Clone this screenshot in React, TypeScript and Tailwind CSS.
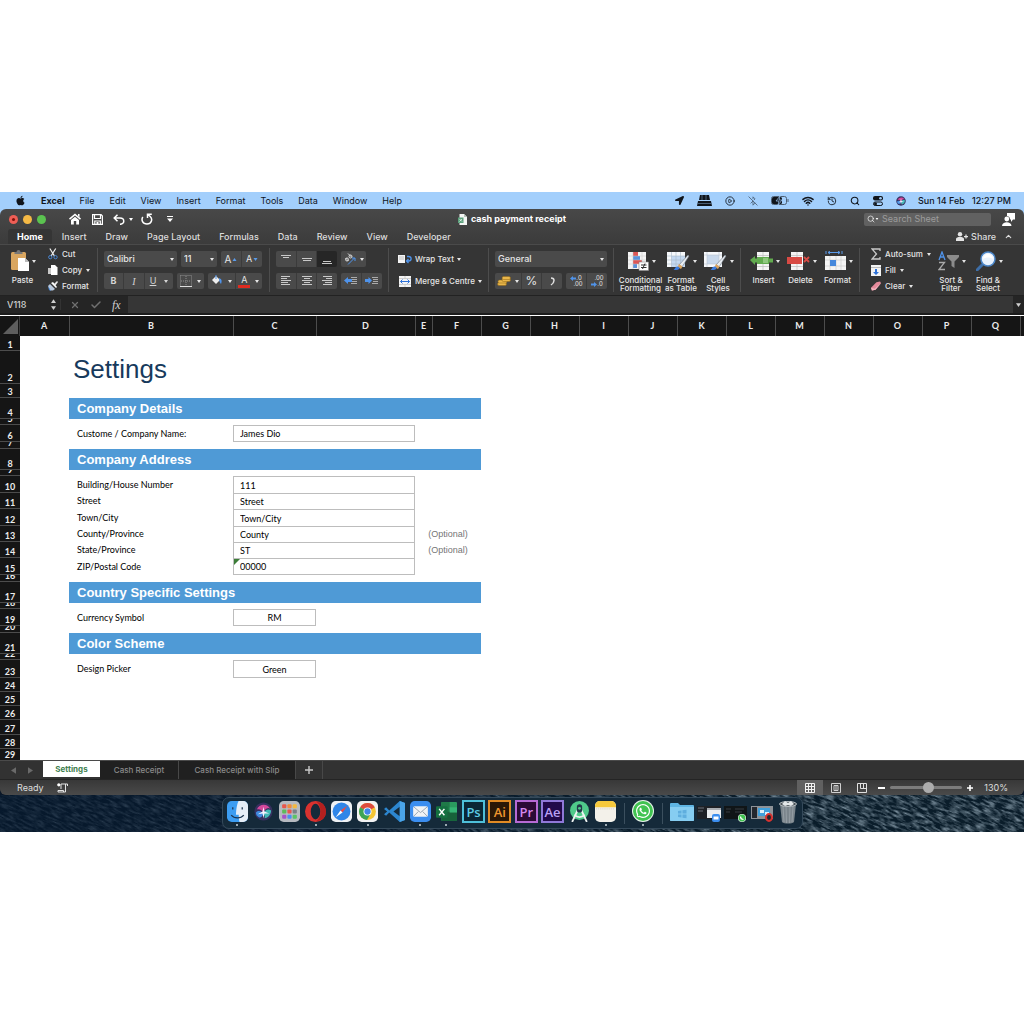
import type { ReactNode } from "react";
import clsx from "clsx";
import { FaApple, FaLocationArrow, FaWhatsapp } from "react-icons/fa";
import { BluetoothOff, Check, ChevronUp, CirclePlay, History, Search, Wifi, X } from "lucide-react";

const menus = ["File", "Edit", "View", "Insert", "Format", "Tools", "Data", "Window", "Help"];
const ribbonTabs = ["Home", "Insert", "Draw", "Page Layout", "Formulas", "Data", "Review", "View", "Developer"];
const columns = "ABCDEFGHIJKLMNOPQ".split("");
const columnWidths: Record<string, string> = {
  B: "w-[164px]",
  C: "w-[83px]",
  D: "w-[99px]",
  E: "w-[17px]",
};

type Row = {
  n: number;
  h: string;
  title?: string;
  band?: string;
  label?: string;
  value?: string;
  short?: boolean;
  optional?: boolean;
  last?: boolean;
  flag?: boolean;
};

const rows: Row[] = [
  { n: 1, h: "h-[15px]" },
  { n: 2, h: "h-[33px]", title: "Settings" },
  { n: 3, h: "h-[14px]" },
  { n: 4, h: "h-[21px]", band: "Company Details" },
  { n: 5, h: "h-[6px]" },
  { n: 6, h: "h-[17px]", label: "Custome / Company Name:", value: "James Dio", last: true },
  { n: 7, h: "h-[7px]" },
  { n: 8, h: "h-[21px]", band: "Company Address" },
  { n: 9, h: "h-[6px]" },
  { n: 10, h: "h-[17px]", label: "Building/House Number", value: "111" },
  { n: 11, h: "h-[16px]", label: "Street", value: "Street" },
  { n: 12, h: "h-[17px]", label: "Town/City", value: "Town/City" },
  { n: 13, h: "h-[16px]", label: "County/Province", value: "County", optional: true },
  { n: 14, h: "h-[16px]", label: "State/Province", value: "ST", optional: true },
  { n: 15, h: "h-[17px]", label: "ZIP/Postal Code", value: "00000", last: true, flag: true },
  { n: 16, h: "h-[7px]" },
  { n: 17, h: "h-[21px]", band: "Country Specific Settings" },
  { n: 18, h: "h-[6px]" },
  { n: 19, h: "h-[17px]", label: "Currency Symbol", value: "RM", short: true, last: true },
  { n: 20, h: "h-[7px]" },
  { n: 21, h: "h-[21px]", band: "Color Scheme" },
  { n: 22, h: "h-[6px]" },
  { n: 23, h: "h-[18px]", label: "Design Picker", value: "Green", short: true, last: true },
  { n: 24, h: "h-[14px]" },
  { n: 25, h: "h-[14px]" },
  { n: 26, h: "h-[14px]" },
  { n: 27, h: "h-[15px]" },
  { n: 28, h: "h-[14px]" },
  { n: 29, h: "h-[11px]" },
];

function Caret({ className }: { className?: string }) {
  return (
    <svg viewBox="0 0 4 3" className={clsx("shrink-0 fill-current", className ?? "h-[3px] w-1")}>
      <path d="M0 0h4L2 3z" />
    </svg>
  );
}

function SiriOrb({ className }: { className: string }) {
  return (
    <svg viewBox="0 0 20 20" className={className}>
      <circle cx="10" cy="10" r="9.500" fill="#37305f" />
      <path d="M3 8C5 2 14 1 17 7c-3-2-6 1-7 4C8 8 5 7 3 8z" fill="#d4489b" />
      <path d="M2 11c3-3 6-1 8 1-1 3-3 5-5 4-2-1-3-3-3-5z" fill="#3f8be0" />
      <path d="M10 12c2-4 5-5 8-3 0 4-3 8-7 8 1-2 0-3-1-5z" fill="#42b8b6" />
      <path d="M10 5l1 5 5 2-5 0-1 5-1-5-5 1 5-3z" fill="#f4f2ff" />
    </svg>
  );
}

function MenuBar() {
  return (
    <div className="flex h-[17px] items-center bg-[#a3cffc] text-[9px] text-[#10151c]">
      <FaApple className="ml-[15px] size-[11px]" />
      <nav className="ml-[15px] flex items-center gap-[15px]">
        <button className="font-bold">Excel</button>
        {menus.map((m) => (
          <button key={m}>{m}</button>
        ))}
      </nav>
      <div className="ml-auto flex items-center gap-[13px]">
        <FaLocationArrow className="size-[9px]" />
        <svg viewBox="0 0 15 11" className="h-[11px] w-[15px]">
          <path d="M3 0h9l1 5H2z M1 6h13l1 5H0z" fill="#10151c" />
          <path d="M5 0v5M9 0v5M1 8.500h13" stroke="#a3cffc" strokeWidth=".4" />
        </svg>
        <CirclePlay className="size-[10px]" />
        <BluetoothOff className="size-[10px] opacity-60" />
        <svg viewBox="0 0 18 9" className="h-[9px] w-[18px]" fill="none">
          <rect x=".5" y=".5" width="15" height="8" rx="2" stroke="#4d6075" />
          <rect x="1" y="1" width="10" height="7" rx="1.500" fill="#10151c" />
          <path d="M17 3v3" stroke="#4d6075" />
          <path d="M9 0L5 5h3L7 9l4-5H8z" fill="#10151c" stroke="#a3cffc" strokeWidth=".7" />
        </svg>
        <Wifi strokeWidth={3} className="size-3" />
        <History className="size-[10px]" />
        <Search strokeWidth={2.500} className="size-[10px]" />
        <svg viewBox="0 0 10 10" className="size-[10px]">
          <rect width="10" height="4.500" rx="2" fill="#10151c" />
          <circle cx="7.500" cy="2.200" r="1.300" fill="#a3cffc" />
          <rect x=".5" y="6" width="9" height="3.500" rx="1.700" fill="none" stroke="#10151c" />
          <circle cx="2.500" cy="7.800" r="1.500" fill="#10151c" />
        </svg>
        <SiriOrb className="size-[10px]" />
      </div>
      <div className="flex gap-[7px] pr-[13px] pl-[12px] font-medium">
        <span>Sun 14 Feb</span>
        <span>12:27 PM</span>
      </div>
    </div>
  );
}

function TitleBar() {
  return (
    <div className="grid h-5 grid-cols-[1fr_auto_1fr] items-center text-white">
      <div className="flex items-center">
        <div className="ml-[9px] flex gap-[5px]">
          <button aria-label="Close" className="flex size-[9px] items-center justify-center rounded-full bg-[#ee5e55]">
            <span className="size-[3px] rounded-full bg-[#7c100b]" />
          </button>
          <button aria-label="Minimise" className="size-[9px] rounded-full bg-[#f5b945]" />
          <button aria-label="Zoom" className="size-[9px] rounded-full bg-[#5bc350]" />
        </div>
        <button aria-label="Home" className="ml-[23px]">
          <svg viewBox="0 0 12 12" className="size-3" fill="#fff">
            <path d="M6 .5l6 5-1 1.200L6 2.600 1 6.700 0 5.500zM9 1h1.500v3L9 2.800z" />
            <path d="M2 7l4-3.300L10 7v4.500H7.200V8H4.800v3.500H2z" />
          </svg>
        </button>
        <button aria-label="Save" className="ml-[11px]">
          <svg viewBox="0 0 11 11" className="size-[11px]" fill="none" stroke="#fff" strokeWidth="1.200">
            <path d="M.6.600h8.500l1.300 1.300v8.500H.6z M2.500 1v3.500h6V1M2.800 10V7h5.500v3" />
            <path d="M4.500 8h2v2h-2z" fill="#fff" stroke="none" />
          </svg>
        </button>
        <button aria-label="Undo" className="ml-[10px] flex items-center gap-[4px]">
          <svg viewBox="0 0 12 11" className="h-[11px] w-3" fill="none" stroke="#fff" strokeWidth="1.500">
            <path d="M4.500.7L1.200 4l3.300 3.300M1.500 4H7c5 0 5 6.300 0 6.300" />
          </svg>
          <Caret />
        </button>
        <button aria-label="Redo" className="ml-[8px]">
          <svg viewBox="0 0 12 12" className="size-3" fill="none" stroke="#fff" strokeWidth="1.500">
            <path d="M6.500 5V1.200h4.300M7 1.500l2.200 2C12 6 10.500 11 6 11 1.500 11 0 7 1.800 4" />
          </svg>
        </button>
        <button aria-label="Customise toolbar" className="ml-[14px]">
          <svg viewBox="0 0 6 6" className="size-[6px]" fill="#fff">
            <path d="M0 0h6v1H0zM0 2.500h6L3 6z" />
          </svg>
        </button>
      </div>
      <div className="flex items-center gap-[4px] text-[9px] font-bold">
        <svg viewBox="0 0 9 11" className="h-[11px] w-[9px]">
          <path d="M1.500 0H6l3 3v8H1.500z" fill="#f4f6f4" />
          <path d="M6 0v3h3z" fill="#b6c2b9" />
          <rect y="3.500" width="5.500" height="5.500" fill="#5ca27d" />
          <path d="M1.500 5l2.500 2.500M4 5L1.500 7.500" stroke="#fff" strokeWidth=".7" />
        </svg>
        cash payment receipt
      </div>
      <div className="flex items-center justify-end">
        <label className="flex h-[13px] w-[127px] items-center rounded-[2px] bg-[#616161] px-[3px]">
          <Search className="size-2 shrink-0" />
          <Caret className="mr-[3px] h-[2px] w-1" />
          <input
            aria-label="Search Sheet"
            placeholder="Search Sheet"
            className="min-w-0 flex-1 bg-transparent text-[9px] outline-none placeholder:text-[#9c9c9c]"
          />
        </label>
        <svg viewBox="0 0 13 13" className="mr-[9px] ml-[11px] size-[13px]" fill="#fff">
          <path d="M5 0h8v6.500h-2L9 9V6.500H8A3.500 3.500 0 0 0 5 3z" />
          <circle cx="4.800" cy="6" r="2.400" />
          <path d="M0 13c0-5 9.500-5 9.500 0z" />
        </svg>
      </div>
    </div>
  );
}

function RibbonTabs() {
  return (
    <div className="flex h-4 items-stretch justify-between border-b border-[#4a4a4a] text-[9px] font-medium text-[#dcdcdc]">
      <nav className="ml-2 flex gap-px">
        {ribbonTabs.map((t) => (
          <button
            key={t}
            className={clsx("rounded-t-[3px] px-[9px]", t === "Home" && "bg-[#353535] font-bold text-white")}
          >
            {t}
          </button>
        ))}
      </nav>
      <div className="flex items-center gap-2 pr-[11px]">
        <button className="flex items-center gap-[3px]">
          <svg viewBox="0 0 12 9" className="h-[9px] w-3" fill="#e4e4e4">
            <circle cx="4" cy="2.300" r="2.200" />
            <path d="M0 9V7c0-2.600 8-2.600 8 0v2zM8 4h4v1.200H8zM9.400 2.600h1.200v4H9.400z" />
          </svg>
          Share
        </button>
        <ChevronUp strokeWidth={3} className="size-[9px]" />
      </div>
    </div>
  );
}

function Group({ children, className }: { children: ReactNode; className?: string }) {
  return <div className={clsx("my-[3px] flex h-[44px] shrink-0 border-r border-[#4d4d4d]", className)}>{children}</div>;
}

const cell = "flex h-4 items-center justify-center border-r border-[#3b3b3b] bg-[#4a4a4a] last:border-r-0";
const stack = "flex-col justify-center gap-[6px] pl-[6px]";

function Segment({ children, className }: { children: ReactNode; className?: string }) {
  return <div className={clsx("flex overflow-hidden rounded-[2px]", className)}>{children}</div>;
}

function Pick({ label, value, className }: { label: string; value: string; className: string }) {
  return (
    <div className={clsx("grid items-center rounded-[2px] bg-[#4a4a4a]", className)}>
      <select
        aria-label={label}
        className="col-start-1 row-start-1 h-4 w-full appearance-none bg-transparent pl-[3px] text-[9px] font-medium outline-none"
      >
        <option>{value}</option>
      </select>
      <Caret className="pointer-events-none col-start-1 row-start-1 mr-[3px] h-[3px] w-1 justify-self-end" />
    </div>
  );
}

function Lines({ rows }: { rows: [number, number, number][] }) {
  return (
    <svg viewBox="0 0 12 12" className="size-3" stroke="#c9c9c9">
      {rows.map(([x1, x2, y]) => (
        <path key={y} d={`M${x1} ${y}.5H${x2}`} />
      ))}
    </svg>
  );
}

function Indent({ out }: { out?: boolean }) {
  return (
    <svg viewBox="0 0 14 10" className="h-[10px] w-[14px]">
      <path d="M7 1.500h6M8 3.500h5M8 5.500h5M7 7.500h6" stroke="#c4c4c4" strokeWidth=".8" />
      <path d={out ? "M0 4.500l4-3.500v2h4v3H4v2z" : "M7 4.500L3.500 1v2H0v3h3.500v2z"} fill="#4f93ea" />
    </svg>
  );
}

function Big({ icon, children, className }: { icon: ReactNode; children: ReactNode; className: string }) {
  return (
    <button className={clsx("flex h-[46px] flex-col items-center text-center text-[8px]/[8px] font-medium", className)}>
      <span className="mb-[2px] flex h-[26px] items-center gap-[3px] pl-[2px]">
        {icon}
        <Caret />
      </span>
      <span className="whitespace-nowrap">{children}</span>
    </button>
  );
}

function Brush() {
  return (
    <>
      <path d="M21 4l1 1-7 11-3-2z" fill="#e9edf2" stroke="#6d7884" strokeWidth=".6" />
      <path d="M12 13l3.500 2.500-1.500 2.500-3.500-2z" fill="#d9a35e" />
      <path d="M6 19c2 0 2-4 5-3.500 3 1 2 4-5 3.500z" fill="#3c7de0" />
    </>
  );
}

function ClipboardGroup() {
  return (
    <Group className="w-[98px] pl-[6px]">
      <Big
        className="w-[33px]"
        icon={
          <svg viewBox="0 0 18 22" className="h-[22px] w-[18px] shrink-0">
            <rect y="2" width="15" height="18" rx="1.500" fill="#d9a660" />
            <path d="M3.500 4V2h2a2 2 0 0 1 4 0h2v2z" fill="#777" />
            <path d="M7 8h7l4 4v9H7z" fill="#fff" />
            <path d="M14 8v4h4z" fill="#bcbcbc" />
          </svg>
        }
      >
        Paste
      </Big>
      <div className="ml-[9px] flex flex-col justify-between text-[8px] font-medium">
        <button className="flex h-3 items-center gap-[4px]">
          <svg viewBox="0 0 11 12" className="h-3 w-[10px]" fill="none">
            <path d="M2 0l5 8M8.500 0l-5 8" stroke="#eee" strokeWidth="1.300" />
            <circle cx="2.500" cy="9.500" r="1.800" stroke="#4b8de0" />
            <circle cx="8.300" cy="9.500" r="1.800" stroke="#4b8de0" />
          </svg>
          Cut
        </button>
        <button className="flex h-3 items-center gap-[4px]">
          <svg viewBox="0 0 10 11" className="h-[11px] w-[10px]">
            <path d="M0 3h5v6H0z" fill="#c8c8c8" />
            <path d="M3 0h4l2.500 2.500V10H3z" fill="#fff" />
          </svg>
          Copy
          <Caret />
        </button>
        <button className="flex h-3 items-center gap-[4px]">
          <svg viewBox="0 0 10 10" className="size-[10px]">
            <path d="M6 3l3-3 1 1-2.500 3.500z" fill="#e9e9e9" />
            <path d="M2 3l5 5-2 1.500H2L0 5z" fill="#b8c8dc" />
            <path d="M3 2l5 5 1-1-4-5z" fill="#fff" />
            <path d="M0 5l3 5-2-1z" fill="#4b8de0" />
          </svg>
          Format
        </button>
      </div>
    </Group>
  );
}

function FontGroup() {
  return (
    <Group className={clsx("w-[172px]", stack)}>
      <div className="flex gap-[4px]">
        <Pick label="Font" value="Calibri" className="w-[73px]" />
        <Pick label="Font size" value="11" className="w-[36px]" />
        <Segment className="w-[41px]">
          <button aria-label="Grow font" className={clsx(cell, "flex-1 gap-px text-[10px]")}>
            A<Caret className="h-[3px] w-[5px] rotate-180 text-[#5b9bea]" />
          </button>
          <button aria-label="Shrink font" className={clsx(cell, "flex-1 gap-px text-[9px]")}>
            A<Caret className="h-[3px] w-[5px] text-[#5b9bea]" />
          </button>
        </Segment>
      </div>
      <div className="flex gap-[4px]">
        <Segment className="w-[69px] text-[9px] text-[#d5d5d5]">
          <button className={clsx(cell, "w-5 font-bold")}>B</button>
          <button className={clsx(cell, "w-[21px] font-['Liberation_Serif'] text-[10px] italic")}>I</button>
          <button className={clsx(cell, "flex-1 gap-2")}>
            <u>U</u>
            <Caret />
          </button>
        </Segment>
        <Segment className="w-[27px]">
          <button aria-label="Borders" className={clsx(cell, "flex-1 gap-[5px]")}>
            <svg viewBox="0 0 12 12" className="size-3" fill="none">
              <path d="M.5.500h11v11M.5.500v11M6 1v10M1 6h10" stroke="#8d8d8d" strokeDasharray="1 1" />
              <path d="M0 11.500h12" stroke="#ddd" />
            </svg>
            <Caret />
          </button>
        </Segment>
        <Segment className="w-[54px]">
          <button aria-label="Fill colour" className={clsx(cell, "flex-1 gap-[5px]")}>
            <svg viewBox="0 0 12 12" className="size-3">
              <path d="M1 5l4-4 4 4-4 4z" fill="#eee" />
              <path d="M5 0v4" stroke="#4f93ea" />
              <path d="M8 3c3 1 3 3 2 6-1-1-2-3-2-6z" fill="#4f93ea" />
            </svg>
            <Caret />
          </button>
          <button aria-label="Font colour" className={clsx(cell, "flex-1 gap-[5px]")}>
            <span className="border-b-3 border-[#e02b20] px-[3px] text-[9px]/[10px]">A</span>
            <Caret />
          </button>
        </Segment>
      </div>
    </Group>
  );
}

function AlignGroup() {
  return (
    <Group className={clsx("w-[119px]", stack)}>
      <div className="flex gap-[4px]">
        <Segment className="w-[61px]">
          <button aria-label="Top align" className={clsx(cell, "flex-1")}>
            <Lines rows={[[1, 11, 2], [3, 9, 4]]} />
          </button>
          <button aria-label="Middle align" className={clsx(cell, "flex-1")}>
            <Lines rows={[[1, 11, 5], [2, 10, 7]]} />
          </button>
          <button aria-label="Bottom align" className="flex h-4 flex-1 items-center justify-center bg-[#262626]">
            <Lines rows={[[2, 10, 8], [1, 11, 10]]} />
          </button>
        </Segment>
        <Segment className="w-[25px]">
          <button aria-label="Orientation" className={clsx(cell, "flex-1 gap-[4px]")}>
            <svg viewBox="0 0 12 12" className="size-3" fill="none" stroke="#ddd">
              <circle cx="3" cy="6.500" r="1.500" />
              <circle cx="6.500" cy="3.500" r="1.500" />
              <path d="M4 .5l3.500 3.500M4.500 8L1.500 5" />
              <path d="M4 11.500l6.500-6.500M8 5h3V8" stroke="#4f93ea" />
            </svg>
            <Caret />
          </button>
        </Segment>
      </div>
      <div className="flex gap-[4px]">
        <Segment className="w-[61px]">
          <button aria-label="Align left" className={clsx(cell, "flex-1")}>
            <Lines rows={[[1, 10, 1], [1, 7, 3], [1, 11, 5], [1, 8, 7], [1, 10, 9]]} />
          </button>
          <button aria-label="Centre" className={clsx(cell, "flex-1")}>
            <Lines rows={[[1, 11, 1], [3, 9, 3], [1, 11, 5], [3, 9, 7], [1, 11, 9]]} />
          </button>
          <button aria-label="Align right" className={clsx(cell, "flex-1")}>
            <Lines rows={[[2, 11, 1], [5, 11, 3], [1, 11, 5], [4, 11, 7], [2, 11, 9]]} />
          </button>
        </Segment>
        <Segment className="w-[41px]">
          <button aria-label="Decrease indent" className={clsx(cell, "flex-1")}>
            <Indent out />
          </button>
          <button aria-label="Increase indent" className={clsx(cell, "flex-1")}>
            <Indent />
          </button>
        </Segment>
      </div>
    </Group>
  );
}

function WrapGroup() {
  return (
    <Group className="w-[100px] flex-col justify-center gap-[6px] pl-[9px] text-[8px] font-medium">
      <button className="flex h-4 items-center gap-[3px]">
        <svg viewBox="0 0 14 10" className="h-[10px] w-[14px]">
          <path d="M0 1h7v8H0z" fill="#f4f4f4" />
          <path d="M1 3h5M1 5h5" stroke="#aaa" strokeWidth=".7" />
          <path d="M9 2.500h1.500c3.500 0 3.500 4.500 0 4.500H9M10.500 5L8.500 7l2 2" fill="none" stroke="#4f93ea" strokeWidth="1.300" />
        </svg>
        Wrap Text
        <Caret />
      </button>
      <button className="flex h-4 items-center gap-[3px] whitespace-nowrap">
        <svg viewBox="0 0 12 11" className="mx-px h-[11px] w-3">
          <path d="M0 0h12v11H0z" fill="#f4f4f4" />
          <path d="M6 0v2.500M6 8.500V11M0 2.500h12M0 8.500h12" stroke="#b5b5b5" strokeWidth=".6" />
          <path d="M1.500 5.500h9M3.500 3.500l-2 2 2 2M8.500 3.500l2 2-2 2" fill="none" stroke="#2f72d8" />
        </svg>
        Merge &amp; Centre
        <Caret />
      </button>
    </Group>
  );
}

function NumberGroup() {
  return (
    <Group className={clsx("w-[125px]", stack)}>
      <Pick label="Number format" value="General" className="w-[112px]" />
      <div className="flex gap-[4px]">
        <Segment className="w-[67px]">
          <button aria-label="Currency" className={clsx(cell, "w-[27px] gap-[4px]")}>
            <svg viewBox="0 0 14 10" className="h-[10px] w-[14px]" fill="#e9b64a" stroke="#8d6416" strokeWidth=".5">
              <rect x=".5" y="6.500" width="9" height="3" rx="1.500" />
              <rect x="1" y="4" width="9" height="3" rx="1.500" />
              <rect x="5" y="2.500" width="8.500" height="3" rx="1.500" />
              <rect x="5" y=".5" width="8.500" height="3" rx="1.500" />
            </svg>
            <Caret />
          </button>
          <button className={clsx(cell, "w-5 text-xs")}>%</button>
          <button aria-label="Comma style" className={clsx(cell, "flex-1")}>
            <svg viewBox="0 0 5 9" className="h-[9px] w-[5px]" fill="none" stroke="#ddd" strokeWidth="1.500">
              <path d="M1 1c4 0 4 4 0 7" />
            </svg>
          </button>
        </Segment>
        <Segment className="w-[41px]">
          <button aria-label="Increase decimal" className={clsx(cell, "flex-1 flex-col text-[6px]/[6px]")}>
            <span className="flex items-center">
              <svg viewBox="0 0 6 5" className="h-[5px] w-[6px]" fill="#4f93ea">
                <path d="M0 2.500L3 0v1.500h3v2H3V5z" />
              </svg>
              .0
            </span>
            <span className="pl-1">.00</span>
          </button>
          <button aria-label="Decrease decimal" className={clsx(cell, "flex-1 flex-col text-[6px]/[6px]")}>
            <span className="pl-1">.00</span>
            <span className="flex items-center">
              <svg viewBox="0 0 6 5" className="h-[5px] w-[6px]" fill="#4f93ea">
                <path d="M6 2.500L3 0v1.500H0v2h3V5z" />
              </svg>
              .0
            </span>
          </button>
        </Segment>
      </div>
    </Group>
  );
}

function StylesGroup() {
  return (
    <Group className="w-[127px] pl-[5px]">
      <Big
        className="w-[43px]"
        icon={
          <svg viewBox="0 0 22 20" className="h-5 w-[22px] shrink-0">
            <path d="M1 1h18v17H1z" fill="#f4f4f4" />
            <path d="M6 1h5v4H6zM6 9h9v4H6z" fill="#dc5656" />
            <path d="M6 5h7v4H6zM6 13h4v4H6z" fill="#5b92da" />
            <path d="M1 5h18M1 9h18M1 13h18M6 1v17M15 1v17" stroke="#c8c8c8" strokeWidth=".5" />
            <path d="M12 11h9.500v8.500H12z" fill="#fff" stroke="#888" strokeWidth=".6" />
            <path d="M14 14h5.500M14 16.500h5.500M18 12.500l-2.500 5.500" stroke="#333" />
          </svg>
        }
      >
        Conditional
        <br />
        Formatting
      </Big>
      <Big
        className="w-[38px]"
        icon={
          <svg viewBox="0 0 23 20" className="h-5 w-[23px] shrink-0">
            <path d="M0 1h18v15H0z" fill="#f6f8fb" />
            <path d="M4.500 5H18v11H4.500z" fill="#c4d9f2" />
            <path d="M0 5h18M0 9h18M0 13h18M4.500 1v15M9 1v15M13.500 1v15" stroke="#a9b8c8" strokeWidth=".6" />
            <Brush />
          </svg>
        }
      >
        Format
        <br />
        as Table
      </Big>
      <Big
        className="w-[36px]"
        icon={
          <svg viewBox="0 0 23 20" className="h-5 w-[23px] shrink-0">
            <path d="M0 1h18v15H0z" fill="#f6f8fb" />
            <path d="M3 4h12v9H3z" fill="#c9d9ec" />
            <path d="M0 4h18M0 13h18M3 1v15M15 1v15" stroke="#b9c4d0" strokeWidth=".6" />
            <Brush />
          </svg>
        }
      >
        Cell
        <br />
        Styles
      </Big>
    </Group>
  );
}

function CellsGroup() {
  return (
    <Group className="w-[119px] pl-[4px]">
      <Big
        className="w-[37px]"
        icon={
          <svg viewBox="0 0 23 20" className="h-5 w-[23px] shrink-0">
            <path d="M7 1h12v18H7z" fill="#f4f4f4" />
            <path d="M13 1v18M7 4.500h12M7 15.500h12" stroke="#bbb" strokeWidth=".7" />
            <path d="M0 9l5-4v2.500h18v4H5V14z" fill="#62ab4f" />
            <path d="M7 6h12v7H7z" fill="#62ab4f" />
            <path d="M13 7h5v5h-5z" fill="#8fc77f" />
          </svg>
        }
      >
        Insert
      </Big>
      <Big
        className="w-[37px]"
        icon={
          <svg viewBox="0 0 23 20" className="h-5 w-[23px] shrink-0">
            <path d="M4 1h12v18H4z" fill="#f4f4f4" />
            <path d="M10 1v18M4 4.500h12M4 15.500h12" stroke="#bbb" strokeWidth=".7" />
            <path d="M0 6h15v7H0z" fill="#d84a44" />
            <path d="M17 6l5 5M22 6l-5 5" stroke="#d84a44" strokeWidth="1.800" />
          </svg>
        }
      >
        Delete
      </Big>
      <Big
        className="w-[37px]"
        icon={
          <svg viewBox="0 0 21 20" className="h-5 w-[21px] shrink-0">
            <path d="M0 5h21v14H0z" fill="#f4f4f4" />
            <path d="M0 9h21M0 15h21M5 5v14M11 5v14M16 5v14" stroke="#c8c8c8" strokeWidth=".6" />
            <path d="M5 9h6v6H5z" fill="#4688dc" />
            <path d="M1 0v3M17 0v3M3 1.500h12M5 0L3 1.500 5 3M13 0l2 1.500L13 3" fill="none" stroke="#5b9bea" />
          </svg>
        }
      >
        Format
      </Big>
    </Group>
  );
}

function EditingGroup() {
  return (
    <div className="my-[3px] flex h-[44px] shrink-0 pl-[11px]">
      <div className="flex w-[63px] flex-col justify-between text-[8px] font-medium">
        <button className="flex h-3 items-center gap-[4px] whitespace-nowrap">
          <svg viewBox="0 0 10 12" className="h-3 w-[10px]" fill="none" stroke="#c9c9c9" strokeWidth="1.300">
            <path d="M9 3V1H1l4.500 5L1 11h8V9" />
          </svg>
          Auto-sum
          <Caret />
        </button>
        <button className="flex h-3 items-center gap-[4px]">
          <svg viewBox="0 0 10 11" className="h-[11px] w-[10px]">
            <path d="M0 0h10v11H0z" fill="#f4f4f4" />
            <path d="M0 2.500h10" stroke="#bbb" />
            <path d="M5 10L2 7h2V4h2v3h2z" fill="#2f72d8" />
          </svg>
          Fill
          <Caret />
        </button>
        <button className="flex h-3 items-center gap-[4px]">
          <svg viewBox="0 0 11 10" className="h-[10px] w-[10px]">
            <path d="M0 7l6-6 4-1 1 2-6 7-4 1z" fill="#e58a9b" />
            <path d="M0 7l4 1 7-6-6 7-4 1z" fill="#f3b6c0" />
          </svg>
          Clear
          <Caret />
        </button>
      </div>
      <Big
        className="w-[34px]"
        icon={
          <svg viewBox="0 0 21 20" className="h-5 w-[21px] shrink-0" fill="none">
            <path d="M1 9l3-8 3 8M2 6h4" stroke="#4f93ea" strokeWidth="1.300" />
            <path d="M1 11.500h5.500L1 18.500h6" stroke="#a9a9a9" strokeWidth="1.300" />
            <path d="M9 4h12v2l-4.500 4.500V17l-3-2v-4.500L9 6z" fill="#8c8c8c" />
          </svg>
        }
      >
        Sort &amp;
        <br />
        Filter
      </Big>
      <Big
        className="w-[40px]"
        icon={
          <svg viewBox="0 0 20 20" className="h-5 w-5 shrink-0">
            <path d="M1 19l6-6" stroke="#3d6ea8" strokeWidth="3" strokeLinecap="round" />
            <circle cx="12" cy="8" r="7" fill="#e8f2fd" stroke="#4b86c8" strokeWidth="1.500" />
            <path d="M7 8a5 5 0 0 1 10 0c-3-2-7-2-10 0z" fill="#fff" />
          </svg>
        }
      >
        Find &amp;
        <br />
        Select
      </Big>
    </div>
  );
}

function FormulaBar() {
  return (
    <div className="flex h-[19px] items-center border-b-2 border-[#1c1c1c] bg-[#252525] text-[#cfcfcf]">
      <input
        aria-label="Name box"
        defaultValue="V118"
        className="ml-[7px] w-[43px] bg-transparent text-[9px] font-medium outline-none"
      />
      <div className="flex w-[11px] flex-col items-center gap-[3px] border-r border-[#333] pr-[3px]">
        <Caret className="h-1 w-[5px] rotate-180" />
        <Caret className="h-1 w-[5px]" />
      </div>
      <button aria-label="Cancel" className="ml-[9px] text-[#707070]">
        <X strokeWidth={3} className="size-[10px]" />
      </button>
      <button aria-label="Enter" className="ml-[10px] text-[#707070]">
        <Check strokeWidth={3} className="size-3" />
      </button>
      <span className="ml-[10px] w-4 font-['Liberation_Serif'] text-xs italic">fx</span>
      <input aria-label="Formula" className="h-full min-w-0 flex-1 bg-[#363636] outline-none" />
      <Caret className="mx-[3px] h-1 w-[5px]" />
    </div>
  );
}

function DataRow({ row, cut }: { row: Row; cut: boolean }) {
  const id = `cell-${row.n}`;
  return (
    <tr>
      <th className="p-0">
        <div
          className={clsx(
            "flex justify-center overflow-hidden border-[#4c4c4c] bg-[#151515] text-[9px]/[11px] font-bold text-[#ececec]",
            cut ? "items-start" : "items-end border-b",
            row.h,
          )}
        >
          {row.n}
        </div>
      </th>
      <td className="p-0" />
      {row.title && (
        <td colSpan={5} className="p-0">
          <h1 className="flex h-[33px] items-end pl-[4px] font-['Liberation_Sans'] text-[26px]/[29px] text-[#173a5c]">
            {row.title}
          </h1>
        </td>
      )}
      {row.band && (
        <td colSpan={5} className="bg-[#4f9ad6] p-0">
          <h2 className="pl-[8px] font-['Liberation_Sans'] text-[13px]/[21px] font-bold text-white">{row.band}</h2>
        </td>
      )}
      {row.label && (
        <>
          <td className="p-0">
            <label htmlFor={id} className={clsx("flex items-center pl-[8px] text-[9px]/[12px] whitespace-nowrap", row.h)}>
              {row.label}
            </label>
          </td>
          <td colSpan={row.short ? 1 : 2} className="relative p-0">
            <input
              id={id}
              defaultValue={row.value}
              className={clsx(
                "block w-full border-x border-t border-[#bdbdbd] px-[6px] text-[9px] outline-none",
                row.last && "border-b",
                row.short && "text-center",
                row.h,
              )}
            />
            {row.flag && <span className="absolute top-px left-px border-t-6 border-r-6 border-t-[#3c7d38] border-r-transparent" />}
          </td>
          {row.optional && (
            <td colSpan={2} className="p-0 text-center font-['Liberation_Sans'] text-[9px]/[12px] text-[#757575]">
              (Optional)
            </td>
          )}
        </>
      )}
    </tr>
  );
}

function Sheet() {
  return (
    <div className="overflow-hidden border-t border-white bg-white font-['Lato','Noto_Sans',sans-serif] text-black">
      <table className="w-full table-fixed border-collapse">
        <colgroup>
          <col className="w-5" />
          {columns.map((c) => (
            <col key={c} className={columnWidths[c] ?? "w-[49px]"} />
          ))}
          <col />
        </colgroup>
        <thead>
          <tr className="bg-[#151515] text-[9px] text-[#ececec]">
            <th className="p-0">
              <svg viewBox="0 0 20 20" className="block size-5">
                <path d="M18 3v15H3z" fill="#5e5e5e" />
                <path d="M19.500 0v20" stroke="#3c3c3c" />
              </svg>
            </th>
            {columns.map((c) => (
              <th key={c} className="h-5 border-r border-[#4c4c4c] p-0 font-bold">
                {c}
              </th>
            ))}
            <th className="p-0" />
          </tr>
        </thead>
        <tbody>
          {rows.map((r, i) => (
            <DataRow key={r.n} row={r} cut={i === rows.length - 1} />
          ))}
        </tbody>
      </table>
    </div>
  );
}

function SheetTabs() {
  return (
    <div className="flex h-[19px] items-start border-t border-[#4a4a4a] bg-[#323232] text-[8px] text-[#8b8b8b]">
      <div className="flex h-[18px] w-[43px] items-center gap-[10px] pl-[10px] text-[#6a6a6a]">
        <Caret className="h-[5px] w-[7px] rotate-90" />
        <Caret className="h-[5px] w-[7px] -rotate-90" />
      </div>
      <button className="h-4 w-[57px] bg-white font-bold text-[#3f7f4f]">Settings</button>
      <button className="h-[18px] w-[79px] border-r border-[#484848] bg-[#202020] font-medium">Cash Receipt</button>
      <button className="h-[18px] w-[117px] border-r border-[#484848] bg-[#202020] font-medium">Cash Receipt with Slip</button>
      <button aria-label="Add sheet" className="flex h-[18px] w-[27px] items-center justify-center border-r border-[#484848]">
        <svg viewBox="0 0 8 8" className="size-2" stroke="#c9c9c9" strokeWidth="1.400">
          <path d="M4 0v8M0 4h8" />
        </svg>
      </button>
    </div>
  );
}

function StatusBar() {
  return (
    <div className="flex h-4 items-center rounded-b-[6px] border-t border-[#242424] bg-linear-to-b from-[#383838] to-[#4a4a4a] text-[9px] text-[#dedede]">
      <span className="ml-[17px]">Ready</span>
      <svg viewBox="0 0 11 10" className="ml-[13px] h-[10px] w-[11px]" fill="none" stroke="#e4e4e4">
        <path d="M4 1h6.500v2M8.500 1v8H1V7.500h5.500V9M4 1v5" />
        <circle cx="1.800" cy="1.800" r="1.600" fill="#fff" stroke="none" />
      </svg>
      <div className="ml-auto flex h-full items-center pr-[16px]">
        <button aria-label="Normal view" className="flex h-full w-[26px] items-center justify-center bg-[#606060]">
          <svg viewBox="0 0 10 10" className="size-[10px]" fill="none" stroke="#f0f0f0">
            <path d="M.5.500h9v9h-9zM3.500 0v10M6.500 0v10M0 3.500h10M0 6.500h10" />
          </svg>
        </button>
        <button aria-label="Page layout" className="flex w-[26px] justify-center">
          <svg viewBox="0 0 10 10" className="size-[10px]" fill="none" stroke="#d0d0d0">
            <path d="M.5.500h9v9h-9zM3 2.500h4v5H3zM5 3v4" />
          </svg>
        </button>
        <button aria-label="Page break preview" className="flex w-[25px] justify-center">
          <svg viewBox="0 0 10 10" className="size-[10px]" fill="none" stroke="#e0e0e0">
            <path d="M.5.500h9v9h-9zM3.500 0v5.500h6M6.500 0v5.500" />
          </svg>
        </button>
        <button aria-label="Zoom out" className="ml-[4px] h-[2px] w-[7px] bg-white" />
        <input
          type="range"
          aria-label="Zoom"
          min={0}
          max={100}
          defaultValue={53}
          className="mx-[5px] h-[3px] w-[72px] appearance-none rounded bg-[#7c7c7c] [&::-webkit-slider-thumb]:size-[11px] [&::-webkit-slider-thumb]:appearance-none [&::-webkit-slider-thumb]:rounded-full [&::-webkit-slider-thumb]:bg-[#acacac]"
        />
        <button aria-label="Zoom in">
          <svg viewBox="0 0 6 6" className="size-[6px]" stroke="#fff" strokeWidth="1.600">
            <path d="M3 0v6M0 3h6" />
          </svg>
        </button>
        <span className="ml-[11px]">130%</span>
      </div>
    </div>
  );
}

function Adobe({ name, className }: { name: string; className: string }) {
  return (
    <button
      className={clsx("flex size-[23px] items-center justify-center border-2 font-['Open_Sans'] text-[13px]/[20px] font-semibold", className)}
    >
      {name}
    </button>
  );
}

function DockApp({ label, running, children }: { label: string; running?: boolean; children: ReactNode }) {
  return (
    <button aria-label={label} className="flex h-[31px] w-[21px] flex-col items-center pt-[3px]">
      <svg viewBox="0 0 20 20" className="size-[21px]">
        {children}
      </svg>
      {running && <span className="mt-[2px] size-[2px] rounded-full bg-[#c9d3da]" />}
    </button>
  );
}

const launchpad = ["#e8574c", "#f08b3c", "#f3b83e", "#5dbb5a", "#e9564f", "#7b8088", "#a653c9", "#4c8ff0", "#5ac466"];

function Preview({ children }: { children: ReactNode }) {
  return (
    <svg viewBox="0 0 24 20" className="mt-[4px] h-5 w-6">
      {children}
    </svg>
  );
}

function Dock() {
  return (
    <div className="relative flex h-[32px] items-start rounded-[7px] border border-[#34495a] bg-[#152a3a] px-[4px]">
      <div className="flex w-[390px] justify-between">
        <DockApp label="Finder" running>
          <rect width="20" height="20" rx="4.500" fill="#3c9df2" />
          <path d="M11 0h4.500A4.500 4.500 0 0 1 20 4.500v11a4.500 4.500 0 0 1-4.500 4.500H12c-.6-2-.8-4-.8-7H8.500C8.800 7 9.500 3 11 0z" fill="#e6eef7" />
          <path d="M5.500 6v2M14.500 6v2M4 13.500c3 3.500 9 3.500 12 0" stroke="#1d3550" strokeWidth="1.200" fill="none" />
        </DockApp>
        <button aria-label="Siri" className="flex h-[31px] w-[21px] justify-center pt-[4px]">
          <SiriOrb className="size-[19px]" />
        </button>
        <DockApp label="Launchpad">
          <rect width="20" height="20" rx="4.500" fill="#b6bac0" />
          {launchpad.map((c, i) => (
            <rect key={c} x={3 + (i % 3) * 5} y={3 + Math.floor(i / 3) * 5} width="4" height="4" rx="1" fill={c} />
          ))}
        </DockApp>
        <DockApp label="Opera" running>
          <ellipse cx="10" cy="10" rx="10" ry="10" fill="#d8322f" />
          <path d="M11 1c6 0 9 4 9 9s-3 9-9 9c5-3 5-15 0-18z" fill="#b3201f" />
          <ellipse cx="10" cy="10" rx="4.500" ry="7.500" fill="#152a3a" />
        </DockApp>
        <DockApp label="Safari">
          <rect width="20" height="20" rx="4.500" fill="#eef1f4" />
          <circle cx="10" cy="10" r="8.500" fill="#2f86e8" />
          <path d="M15.500 4.500l-4.500 6.500-2-2z" fill="#ee4b41" />
          <path d="M4.500 15.500L9 9l2 2z" fill="#fff" />
        </DockApp>
        <DockApp label="Chrome" running>
          <rect width="20" height="20" rx="4.500" fill="#f3f3f3" />
          <circle cx="10" cy="10" r="8" fill="#f5c534" />
          <path d="M10 10L3 6a8 8 0 0 1 14 0z" fill="#dd4b3e" />
          <path d="M10 10L3 6a8 8 0 0 0 6.500 12l3.500-6z" fill="#3ea455" />
          <circle cx="10" cy="10" r="3.800" fill="#fff" />
          <circle cx="10" cy="10" r="3" fill="#4285e8" />
        </DockApp>
        <DockApp label="Visual Studio Code">
          <path d="M15 0l5 2v16l-5 2L5 11l-3 3-2-1.500L3 10 0 7.500 2 6l3 3zM15 5.500L9 10l6 4.500z" fill="#2c86cf" />
          <path d="M15 0l5 2v16l-5 2z" fill="#4aa4e8" />
        </DockApp>
        <DockApp label="Mail" running>
          <rect width="20" height="20" rx="4.500" fill="#3b8ef0" />
          <rect x="3" y="5" width="14" height="10" rx="1.500" fill="#f1f3f5" />
          <path d="M3.500 5.500L10 11l6.500-5.500M3.500 14.500L8 10M16.500 14.500L12 10" fill="none" stroke="#8d9aa8" strokeWidth=".8" />
        </DockApp>
        <DockApp label="Excel" running>
          <rect x="5" y="1" width="15" height="18" rx="1" fill="#2a9a5f" />
          <path d="M5 10h8V1H6a1 1 0 0 0-1 1z" fill="#1f7a48" />
          <path d="M5 10h15v9H5z" fill="#17623a" />
          <path d="M13 6h7v5h-7z" fill="#35b575" />
          <rect y="5" width="11" height="11" rx="1" fill="#147040" />
          <path d="M3 7.500l5 6M8 7.500l-5 6" stroke="#fff" strokeWidth="1.400" />
        </DockApp>
        <div className="flex w-[102px] justify-between pt-[2px]">
          <Adobe name="Ps" className="border-[#4ebfd9] bg-[#0a2635] text-[#5ccbe4]" />
          <Adobe name="Ai" className="border-[#e08a24] bg-[#2a1706] text-[#ee962e]" />
          <Adobe name="Pr" className="border-[#b56ad4] bg-[#2b0a35] text-[#d488ee]" />
          <Adobe name="Ae" className="border-[#8f78d8] bg-[#21094a] text-[#b9a0f5]" />
        </div>
        <DockApp label="Android Studio">
          <circle cx="10" cy="9" r="9" fill="#4fc98a" />
          <path d="M10 5L3 20M10 5l7 15M5 13c3 3 7 3 10 0" stroke="#eef3f1" strokeWidth="1.700" fill="none" />
          <rect x="7.500" y="3" width="5" height="8" rx="2.500" fill="#21384a" />
          <circle cx="10" cy="7" r="1.400" fill="#4fc98a" />
        </DockApp>
        <DockApp label="Notes" running>
          <rect width="20" height="20" rx="4.500" fill="#f3f1ea" />
          <path d="M0 6V4.500A4.500 4.500 0 0 1 4.500 0h11A4.500 4.500 0 0 1 20 4.500V6z" fill="#f6c93c" />
          <path d="M1 7.500h18" stroke="#c3bfb4" strokeDasharray="1 1" strokeWidth=".6" />
        </DockApp>
      </div>
      <div className="mx-[7px] mt-[5px] h-[21px] w-px bg-[#3b4f5e]" />
      <button aria-label="WhatsApp" className="flex h-[31px] w-[23px] flex-col items-center pt-[2px]">
        <span className="flex size-[22px] items-center justify-center rounded-full bg-[#e9f5ec]">
          <FaWhatsapp className="size-5 rounded-full bg-[#41c351] p-[2px] text-white" />
        </span>
        <span className="mt-[2px] size-[2px] rounded-full bg-[#c9d3da]" />
      </button>
      <div className="mx-[7px] mt-[5px] h-[21px] w-px bg-[#3b4f5e]" />
      <div className="flex w-[128px] justify-between">
        <Preview>
          <path d="M0 2a1 1 0 0 1 1-1h7l2 2h13a1 1 0 0 1 1 1v14a1 1 0 0 1-1 1H1a1 1 0 0 1-1-1z" fill="#5fb5e3" />
          <path d="M0 5h24v13a1 1 0 0 1-1 1H1a1 1 0 0 1-1-1z" fill="#86cdf1" />
          <path d="M8 9l3.500-.5v3H8zM12.500 8.300l4-.5v3.700h-4zM8 12.500h3.500v3L8 15zM12.500 12.500h4v3.700l-4-.5z" fill="#5faede" />
        </Preview>
        <Preview>
          <path d="M0 4h24v13H0z" fill="#1e2126" />
          <path d="M10 6h14v10H10z" fill="#eceef0" />
          <path d="M1 6h6M1 9h5M10 7h14" stroke="#6b7079" />
          <rect x="15" y="12" width="8" height="8" rx="2" fill="#3b8ef0" />
          <path d="M16.500 14.500h5v3h-5z" fill="#fff" />
        </Preview>
        <Preview>
          <path d="M0 4h23v13H0z" fill="#101517" />
          <path d="M2 7h5M2 10h4M11 7h9M11 10h7" stroke="#363d42" />
          <circle cx="18" cy="16" r="4" fill="#e9f5ec" />
          <circle cx="18" cy="16" r="3.400" fill="#41c351" />
          <path d="M16.500 14.500c0 2 1.500 3 3 3" stroke="#fff" strokeWidth="1.200" fill="none" />
        </Preview>
        <Preview>
          <path d="M0 4h22v13H0z" fill="#8d9298" />
          <path d="M1 5h5v11H1z" fill="#23272e" />
          <path d="M7 6h12v8H7z" fill="#3fa0dc" />
          <path d="M9 8h4v3H9zM14 10h4v3h-4z" fill="#d8eefa" />
          <ellipse cx="18" cy="15.500" rx="3" ry="3.400" fill="#23272e" stroke="#d8322f" strokeWidth="2" />
        </Preview>
        <svg viewBox="0 0 20 24" className="mt-[2px] h-6 w-5">
          <path d="M2 4h16l-2 18c-2 2-10 2-12 0z" fill="#7b858c" />
          <path d="M5 6l1 16M8 6l.5 17M12 6l-.5 17M15 6l-1 16" stroke="#9fa8ae" strokeWidth=".7" />
          <ellipse cx="10" cy="4" rx="8.500" ry="2.500" fill="#4a5258" stroke="#b5bcc0" />
          <path d="M4 4l3-3 3 2 3-2 3 3-3 2-3-1-3 1z" fill="#e4e8ea" />
        </svg>
      </div>
    </div>
  );
}

function Desktop() {
  return (
    <div className="relative flex h-[37px] justify-center overflow-hidden bg-[#0a1b28] pt-[2px]">
      {/* rippled sea wallpaper */}
      <svg className="absolute inset-0 h-full w-full" preserveAspectRatio="none" viewBox="0 0 1024 37">
        <defs>
          <filter id="waves" x="0" y="0" width="100%" height="100%">
            <feTurbulence type="fractalNoise" baseFrequency="0.1 0.5" numOctaves="3" seed="4" />
            <feColorMatrix values="0 0 0 0 .36  0 0 0 0 .46  0 0 0 0 .54  2.200 0 0 0 -.85" />
          </filter>
          <linearGradient id="fade">
            <stop offset="0" stopColor="#06182d" stopOpacity=".8" />
            <stop offset=".3" stopColor="#06182d" stopOpacity=".75" />
            <stop offset=".8" stopColor="#0b2230" stopOpacity=".25" />
          </linearGradient>
        </defs>
        <g transform="rotate(24 512 20)">
          <rect x="-80" y="-300" width="1200" height="640" filter="url(#waves)" />
        </g>
        <rect width="1024" height="37" fill="url(#fade)" />
      </svg>
      <Dock />
    </div>
  );
}

export default function App() {
  return (
    <div className="min-h-screen bg-white py-48 font-['Inter',sans-serif]">
      <MenuBar />
      <div className="bg-[#091728]">
        <div className="overflow-hidden rounded-b-[6px] bg-[#353535] text-[#e6e6e6]">
          <div className="bg-[#a3cffc]">
            <div className="rounded-t-[6px] bg-linear-to-b from-[#484848] to-[#3b3b3b]">
              <TitleBar />
              <RibbonTabs />
            </div>
          </div>
          <div className="flex h-[51px] overflow-hidden border-b border-[#222]">
            <ClipboardGroup />
            <FontGroup />
            <AlignGroup />
            <WrapGroup />
            <NumberGroup />
            <StylesGroup />
            <CellsGroup />
            <EditingGroup />
          </div>
          <FormulaBar />
          <Sheet />
          <SheetTabs />
          <StatusBar />
        </div>
      </div>
      <Desktop />
    </div>
  );
}
